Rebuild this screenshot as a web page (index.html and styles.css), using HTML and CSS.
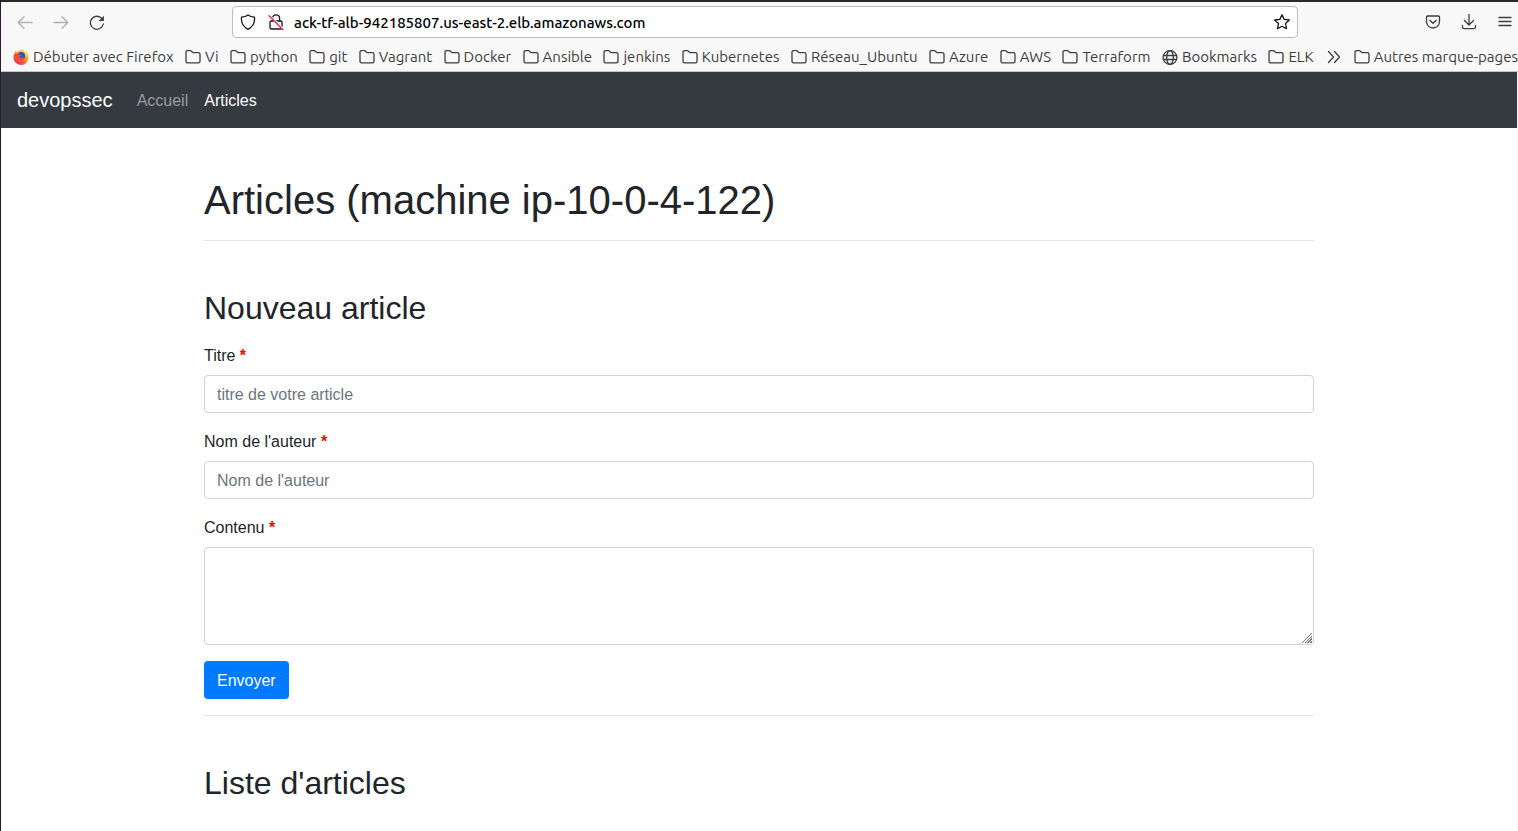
FILE: index.html
```html
<!DOCTYPE html>
<html lang="fr">
<head>
<meta charset="utf-8">
<meta name="viewport" content="width=device-width, initial-scale=1">
<title>Articles</title>
<link rel="stylesheet" href="styles.css">
</head>
<body>
<svg class="symbols" aria-hidden="true">
  <symbol id="folder" viewBox="0 0 16 16"><path d="M1 12.3V3.2q0-1.5 1.5-1.5h2.900q.6 0 1 .4l1 1.100q.3.4.9.4h5q1.700 0 1.700 1.700v7q0 1.600-1.600 1.600h-11Q1 13.900 1 12.300z"/></symbol>
</svg>
<header class="browser">
  <div class="toolbar">
    <div class="history">
      <button class="tool faded" aria-label="Précédent"><svg viewBox="0 0 16 16"><path d="M15 8.500H1.500M7 2.700 1.200 8.500 7 14.300"/></svg></button>
      <button class="tool faded" aria-label="Suivant"><svg viewBox="0 0 16 16"><path d="M1 8.500h13.500M9 2.700 14.800 8.500 9 14.300"/></svg></button>
      <button class="tool" aria-label="Actualiser"><svg viewBox="0 0 16 16"><path d="M14.300 10A6.500 6.500 0 1 1 13 4.700"/><path class="solid" d="M14.900 1.700v4.700q0 .6-.6.600H9.600z"/></svg></button>
    </div>
    <div class="address">
      <svg class="icon dark" viewBox="0 0 16 16"><path d="M8 1c2 1.600 4 2 6.500 2.200.5 5.300-1.500 9.600-6.500 12.100C3 12.800 1 8.500 1.500 3.200 4 3 6 2.600 8 1z"/></svg>
      <svg class="icon dark" viewBox="0 0 16 16"><path d="M4.600 7V4.300a3.500 3.500 0 0 1 7 0V7M3.300 7h9.400q1.300 0 1.300 1.300v5.400q0 1.300-1.300 1.300H3.300Q2 15 2 13.700V8.300Q2 7 3.300 7z"/><path class="halo" d="M1 1.200 15.500 15.200"/><path class="slash" d="M1 1.800 15 15.800"/></svg>
      <input class="url" aria-label="Adresse" value="ack-tf-alb-942185807.us-east-2.elb.amazonaws.com">
      <button class="tool dark" aria-label="Ajouter un marque-page"><svg viewBox="0 0 16 16"><path d="m8 .8 2.200 4.600 5.100.6-3.800 3.500 1 5.200L8 12.200l-4.500 2.500 1-5.200L.7 6l5.100-.6z"/></svg></button>
    </div>
    <div class="actions">
      <button class="tool" aria-label="Pocket"><svg viewBox="0 0 16 16"><path d="M2.500 2h11q1 0 1 1v4.500a6.500 6.500 0 0 1-13 0V3q0-1 1-1zM4.800 6.200 8 9.300l3.200-3.100"/></svg></button>
      <button class="tool" aria-label="Téléchargements"><svg viewBox="0 0 16 16"><path d="M8 .5V10.500M3.500 6.500 8 11l4.500-4.500M1.500 11.500V13q0 1.700 1.700 1.700h9.600q1.700 0 1.700-1.700v-1.500"/></svg></button>
      <button class="tool" aria-label="Menu"><svg viewBox="0 0 16 16"><path d="M2 3.500h12M2 7.500h12M2 11.500h12"/></svg></button>
    </div>
  </div>
  <nav class="bookmarks" aria-label="Marque-pages">
    <div class="marks">
      <a href="#"><svg class="icon firefox" viewBox="0 0 16 16"><defs><linearGradient id="fire" x1=".8" y1=".1" x2=".2" y2=".95"><stop offset="0" stop-color="#ffe64a"/><stop offset=".45" stop-color="#ff8a1d"/><stop offset="1" stop-color="#f5156c"/></linearGradient></defs><path fill="url(#fire)" d="M1.500 4.500 2.800 1.800l1 1.600 1.600-.8C7 1.400 8.500.5 9.600.3c.2 1.700 1.600 2 2.600 3l.4-1c1.800 1.700 2.900 3.900 2.900 6A7.500 7.500 0 0 1 .5 8.500c0-1.500.2-2.800 1-4z"/><circle cx="8.300" cy="6.800" r="3.900" fill="#2559c7"/><path fill="#ff4b25" d="M1.200 5.500C3.200 4.300 4.500 4.500 6 5.500l2.600.4c0 1.200-2.100 1-2.300 1.900.9 1.900 3.200 1.700 5.200.3 0 2.300-1.900 3.900-4.200 3.700C4 11.600 1.500 9.500 1.200 5.500z"/><path fill="#ffd83f" d="M9.500.5c.3 2.700 3.300 3.300 3.200 7.100 1.300-1.200.6-3.500-.5-4.300z"/></svg>Débuter avec Firefox</a>
      <a href="#"><svg class="icon"><use href="#folder"/></svg>Vi</a>
      <a href="#"><svg class="icon"><use href="#folder"/></svg>python</a>
      <a href="#"><svg class="icon"><use href="#folder"/></svg>git</a>
      <a href="#"><svg class="icon"><use href="#folder"/></svg>Vagrant</a>
      <a href="#"><svg class="icon"><use href="#folder"/></svg>Docker</a>
      <a href="#"><svg class="icon"><use href="#folder"/></svg>Ansible</a>
      <a href="#"><svg class="icon"><use href="#folder"/></svg>jenkins</a>
      <a href="#"><svg class="icon"><use href="#folder"/></svg>Kubernetes</a>
      <a href="#"><svg class="icon"><use href="#folder"/></svg>Réseau_Ubuntu</a>
      <a href="#"><svg class="icon"><use href="#folder"/></svg>Azure</a>
      <a href="#"><svg class="icon"><use href="#folder"/></svg>AWS</a>
      <a href="#"><svg class="icon"><use href="#folder"/></svg>Terraform</a>
      <a href="#"><svg class="icon" viewBox="0 0 16 16"><circle cx="8" cy="8.500" r="6.900"/><ellipse cx="8" cy="8.500" rx="3.300" ry="6.900"/><path d="M1.500 6.500h13M1.500 10.500h13"/></svg>Bookmarks</a>
      <a href="#"><svg class="icon"><use href="#folder"/></svg>ELK</a>
    </div>
    <button class="tool" aria-label="Afficher plus de marque-pages"><svg viewBox="0 0 16 16"><path d="m2.500 2.500 5 5.500-5 5.500M8.500 2.500l5 5.500-5 5.500"/></svg></button>
    <a href="#"><svg class="icon"><use href="#folder"/></svg>Autres marque-pages</a>
  </nav>
</header>
<div class="page">
  <nav class="navbar">
    <a class="brand" href="#">devopssec</a>
    <a class="nav-link" href="#">Accueil</a>
    <a class="nav-link active" href="#">Articles</a>
  </nav>
  <main class="container">
    <h1>Articles (machine ip-10-0-4-122)</h1>
    <hr>
    <h2>Nouveau article</h2>
    <form>
      <div class="field">
        <label for="title">Titre <strong>*</strong></label>
        <input class="control" id="title" type="text" placeholder="titre de votre article">
      </div>
      <div class="field">
        <label for="author">Nom de l'auteur <strong>*</strong></label>
        <input class="control" id="author" type="text" placeholder="Nom de l'auteur">
      </div>
      <div class="field">
        <label for="content">Contenu <strong>*</strong></label>
        <textarea class="control area" id="content"></textarea>
      </div>
      <button class="submit" type="submit">Envoyer</button>
    </form>
    <hr>
    <h2>Liste d'articles</h2>
  </main>
</div>
</body>
</html>
```
FILE: styles.css
```css
* {
  box-sizing: border-box;
}

body {
  margin: 0;
  min-height: 100vh;
  display: flex;
  flex-direction: column;
  border-left: 1px solid #2c1a2c;
  background: #fff;
  color: #212529;
  font: 16px/26px "Liberation Sans", Arial, sans-serif;
}

a {
  color: inherit;
  text-decoration: none;
}

.symbols {
  display: none;
}

.browser {
  border-top: 2px solid #2b2a29;
  border-bottom: 1px solid #c5c5c5;
  background: #f8f8f8;
  color: #3d3d3d;
  font-family: Ubuntu, "Noto Sans", sans-serif;
  font-size: 15px;
}

.toolbar {
  display: flex;
  align-items: center;
  padding: 4px 5px 4px 16px;
}

.history,
.actions {
  display: flex;
  gap: 20px;
}

.tool {
  display: flex;
  padding: 0;
  border: 0;
  background: none;
  color: inherit;
}

.tool svg,
.icon {
  flex: none;
  width: 16px;
  height: 16px;
  fill: none;
  stroke: currentColor;
  stroke-width: 1.3;
  stroke-linejoin: round;
  stroke-linecap: round;
}

.tool .solid {
  fill: currentColor;
  stroke: none;
}

.faded {
  color: #b0b0b0;
}

.dark {
  color: #15141a;
}

.icon .halo {
  stroke: #fff;
  stroke-width: 2;
}

.icon .slash {
  stroke: #e22850;
}

.icon.firefox {
  stroke: none;
}

.address {
  flex: 1;
  display: flex;
  align-items: center;
  gap: 12px;
  height: 32px;
  margin: 0 127px;
  padding: 0 7px;
  border: 1px solid #bdbdbd;
  border-radius: 4px;
  background: #fff;
}

.url {
  flex: 1;
  min-width: 0;
  margin-left: -2px;
  padding: 1px 0 0;
  border: 0;
  outline: 0;
  background: none;
  color: #000;
  font: inherit;
  font-weight: 500;
}

.bookmarks {
  display: flex;
  align-items: center;
  gap: 12px;
  height: 29px;
  padding-left: 12px;
  white-space: nowrap;
}

.bookmarks a {
  display: flex;
  align-items: center;
  gap: 4px;
}

.marks {
  flex: 1;
  display: flex;
  justify-content: space-between;
}

.page {
  flex: 1;
  border-right: 1px solid #f2f2f2;
}

.navbar {
  display: flex;
  align-items: center;
  gap: 16px;
  height: 56px;
  padding: 0 16px;
  background: #343a40;
}

.brand {
  margin-right: 8px;
  color: #fff;
  font-size: 20px;
}

.nav-link {
  padding-top: 2px;
  color: #999c9f;
}

.nav-link.active {
  color: #fff;
}

.container {
  max-width: 1140px;
  margin: 0 auto;
  padding: 48px 15px 0;
}

h1,
h2 {
  margin: 0;
  font-weight: 400;
}

h1 {
  font-size: 40px;
  line-height: 48px;
}

h2 {
  margin: 48px 0 16px;
  font-size: 32px;
  line-height: 38px;
}

hr {
  margin: 16px 0 0;
  border: 0;
  border-top: 1px solid #e5e5e5;
}

.field {
  display: flex;
  flex-direction: column;
  gap: 6px;
  margin-bottom: 16px;
}

.field strong {
  color: #f00;
}

.control {
  width: 100%;
  height: 38px;
  padding: 7px 12px 5px;
  border: 1px solid #ced4da;
  border-radius: 4px;
  background: #fff;
  color: #495057;
  font: inherit;
}

.control::placeholder {
  color: #6c757d;
}

.area {
  height: 98px;
  resize: vertical;
}

.area::-webkit-resizer {
  background:
    linear-gradient(135deg, #fff 50%, transparent 50%) right 1px bottom 1px / 11px 11px no-repeat,
    repeating-linear-gradient(135deg, #777 0 1px, #fff 1px 2px) right 1px bottom 1px / 11px 11px no-repeat;
}

.submit {
  height: 38px;
  padding: 7px 13px 5px;
  border: 0;
  border-radius: 4px;
  background: #007bff;
  color: #fff;
  font: inherit;
}
```
